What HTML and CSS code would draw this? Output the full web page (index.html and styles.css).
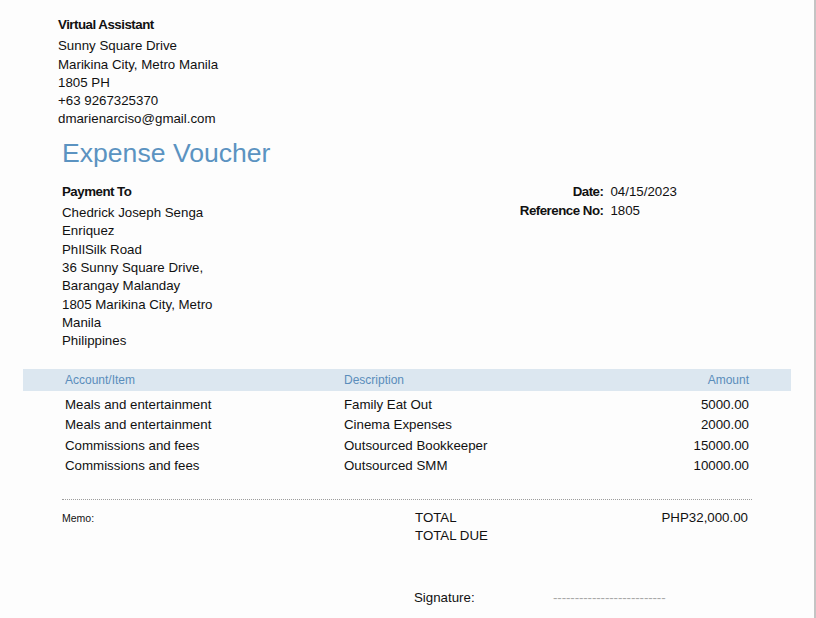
FILE: index.html
```html
<!DOCTYPE html>
<html lang="en">
<head>
  <meta charset="UTF-8" />
  <meta name="viewport" content="width=device-width, initial-scale=1.0" />
  <title>Expense Voucher</title>
  <link rel="stylesheet" href="styles.css">
</head>
<body>
  <div class="sheet">
    <div class="sender">
      <div class="sender-name">Virtual Assistant</div>
      <div>Sunny Square Drive</div>
      <div>Marikina City, Metro Manila</div>
      <div>1805 PH</div>
      <div>+63 9267325370</div>
      <div>dmarienarciso@gmail.com</div>
    </div>

    <h1 class="title">Expense Voucher</h1>

    <div class="info">
      <div class="payee">
        <div class="label">Payment To</div>
        <div>Chedrick Joseph Senga Enriquez</div>
        <div>PhIlSilk Road</div>
        <div>36 Sunny Square Drive, Barangay Malanday</div>
        <div>1805 Marikina City, Metro Manila</div>
        <div>Philippines</div>
      </div>
      <div class="meta">
        <span class="label">Date:</span><span>04/15/2023</span>
        <span class="label">Reference No:</span><span>1805</span>
      </div>
    </div>

    <table class="items">
      <colgroup>
        <col class="col-account">
        <col class="col-desc">
        <col>
      </colgroup>
      <thead>
        <tr>
          <th>Account/Item</th>
          <th>Description</th>
          <th class="num">Amount</th>
        </tr>
      </thead>
      <tbody>
        <tr><td>Meals and entertainment</td><td>Family Eat Out</td><td class="num">5000.00</td></tr>
        <tr><td>Meals and entertainment</td><td>Cinema Expenses</td><td class="num">2000.00</td></tr>
        <tr><td>Commissions and fees</td><td>Outsourced Bookkeeper</td><td class="num">15000.00</td></tr>
        <tr><td>Commissions and fees</td><td>Outsourced SMM</td><td class="num">10000.00</td></tr>
      </tbody>
    </table>

    <div class="totals">
      <div class="memo">Memo:</div>
      <div class="total-labels">
        <div>TOTAL</div>
        <div>TOTAL DUE</div>
      </div>
      <div class="total-amount">PHP32,000.00</div>
    </div>

    <div class="signature">
      <span class="sig-label">Signature:</span>
      <span class="sig-line">--------------------------</span>
    </div>
  </div>
</body>
</html>
```

FILE: styles.css
```css
html, body { margin: 0; padding: 0; background: #fff; }
body { font-family: "Liberation Sans", Arial, Helvetica, sans-serif; font-size: 13.3px; line-height: 18.3px; color: #111; }
.sheet { width: 814px; height: 618px; border-right: 2px solid #c4c4c4; background: #fdfdfd; overflow: hidden; }

.sender { padding: 16px 0 0 58px; }
.sender-name { font-weight: bold; letter-spacing: -0.5px; margin-bottom: 3px; }

.title { margin: 8px 0 0 62px; font-size: 26.6px; line-height: 32px; font-weight: normal; color: #5b93c1; }

.info { display: flex; margin: 14px 0 0 62px; width: 690px; }
.payee { width: 160px; }
.payee .label { margin-bottom: 3px; }
.label { font-weight: bold; letter-spacing: -0.5px; }
.meta { flex: 1; display: grid; grid-template-columns: 1fr auto; column-gap: 7px; row-gap: 1px; align-content: start; padding-right: 75px; }
.meta .label { text-align: right; }

.items { margin: 19px 0 0 23px; width: 768px; border-collapse: collapse; table-layout: fixed; }
.col-account { width: 321px; }
.col-desc { width: 260px; }
.items th { background: #dce7f0; color: #5a8dbb; font-size: 12px; font-weight: normal; text-align: left; height: 22px; padding: 0; }
.items td { padding: 0; height: 20.6px; }
.items tbody tr:first-child td { padding-top: 3px; }
.items th:first-child, .items td:first-child { padding-left: 42px; }
.items .num { text-align: right; padding-right: 42px; }

.totals { display: grid; grid-template-columns: 353px 1fr auto; margin: 22px 0 0 62px; width: 686px; padding: 9px 4px 0 0; border-top: 1px dotted #9c9c9c; }
.memo { font-size: 10.5px; }
.total-amount { text-align: right; }

.signature { display: flex; margin: 44px 0 0 414px; }
.sig-label { width: 139px; }
.sig-line { color: #a8a8a8; letter-spacing: -0.1px; }
```
